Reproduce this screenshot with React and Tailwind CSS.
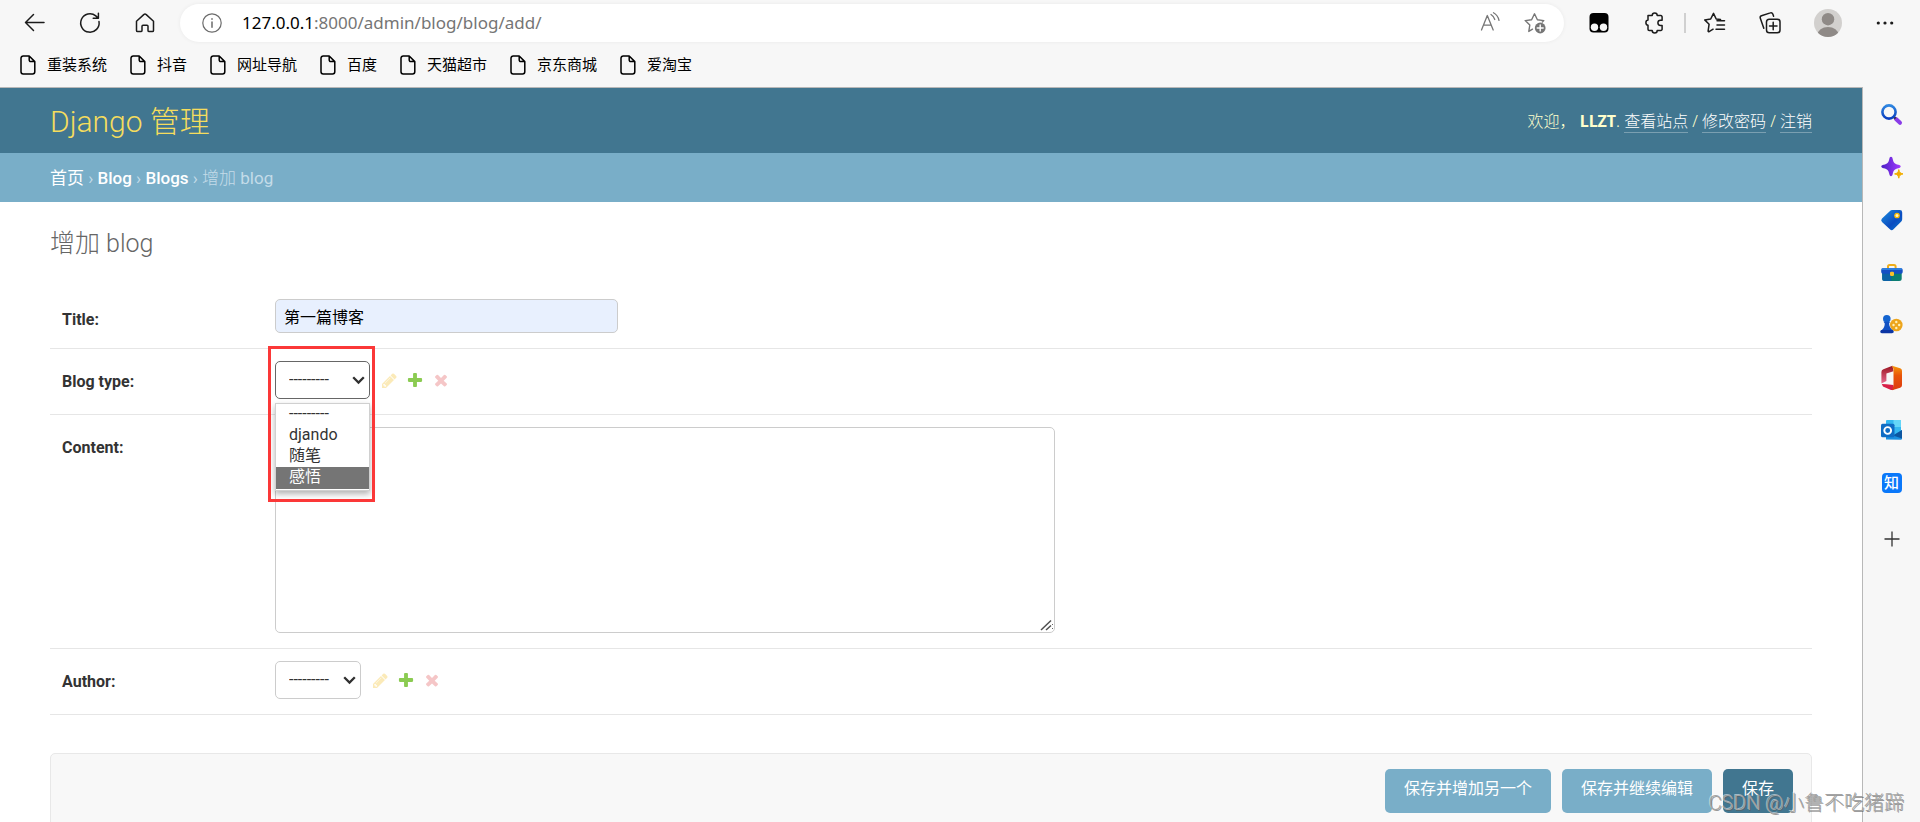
import React from "react";

const bookmarks = ["重装系统", "抖音", "网址导航", "百度", "天猫超市", "京东商城", "爱淘宝"];

const strokeProps = {
  fill: "none",
  stroke: "currentColor",
  strokeLinecap: "round",
  strokeLinejoin: "round",
};

function ToolButton({ label, children, className = "" }) {
  return (
    <button type="button" aria-label={label} className={`flex h-7 shrink-0 items-center justify-center ${className}`}>
      {children}
    </button>
  );
}

function Toolbar() {
  return (
    <div className="flex h-[46px] items-center pr-[23px] pl-[22px] text-[#1b1b1b]">
      <ToolButton label="返回" className="w-6">
        <svg width="24" height="24" viewBox="0 0 24 24" {...strokeProps} strokeWidth="1.5">
          <path d="M22 11.5H3.5M11.5 3.5l-8 8 8 8" />
        </svg>
      </ToolButton>
      <ToolButton label="刷新" className="ml-8 w-6">
        <svg width="24" height="24" viewBox="0 0 24 24" {...strokeProps} strokeWidth="1.5">
          <path d="M21 10.5a9.2 9.2 0 1 1-3.2-5.6l2.4 2.3M20.4 2.2v5.1h-5.2" />
        </svg>
      </ToolButton>
      <ToolButton label="主页" className="ml-[31px] w-6">
        <svg width="24" height="24" viewBox="0 0 24 24" {...strokeProps} strokeWidth="1.5">
          <path d="M3.5 10.2 11 3.4a1.4 1.4 0 0 1 2 0l7.500 6.800v9.200a1.200 1.200 0 0 1-1.200 1.200h-3.100a1.200 1.200 0 0 1-1.200-1.200v-4.200a1 1 0 0 0-1-1h-4a1 1 0 0 0-1 1v4.200a1.200 1.200 0 0 1-1.200 1.200H4.700a1.200 1.200 0 0 1-1.200-1.200z" />
        </svg>
      </ToolButton>

      <div className="ml-[23px] flex h-[38px] min-w-0 flex-1 items-center rounded-full bg-white pr-[17px] pl-[22px] shadow-[0_0_4px_rgba(0,0,0,0.06)]">
        <svg width="20" height="20" viewBox="0 0 20 20" {...strokeProps} strokeWidth="1.2" className="shrink-0 text-[#6b6b6b]">
          <circle cx="10" cy="10" r="9.200" />
          <path d="M10 9v5.200M10 5.800v.4" strokeWidth="1.500" />
        </svg>
        <a href="#address" className="ml-5 flex-1 truncate font-['Noto_Sans',sans-serif] text-[17px] leading-6 text-[#757575]">
          <span className="text-black">127.0.0.1</span>:8000/admin/blog/blog/add/
        </a>
        <ToolButton label="朗读" className="w-6 text-[#767676]">
          <svg width="24" height="24" viewBox="0 0 24 24" {...strokeProps} strokeWidth="1.300">
            <path d="M3.500 19 9.300 4.500 15.200 19M5.600 14.200h7.500M13 3.500c2 1.200 3.200 3 3.800 5M15.500 1.800c3 1.600 4.700 4.200 5.500 7.500" />
          </svg>
        </ToolButton>
        <ToolButton label="收藏此页" className="ml-[21px] w-6 text-[#767676]">
          <svg width="24" height="24" viewBox="0 0 24 24" {...strokeProps} strokeWidth="1.400">
            <path d="M9.500 18.200 5.800 20.400 6.800 14.100 2.200 9.600l6.400-.9L11.500 2.800l2.900 5.900 6.400.9-1.500 1.500" />
            <circle cx="17.200" cy="17" r="5.400" fill="currentColor" stroke="none" />
            <path d="M17.200 14v6M14.200 17h6" stroke="#fff" />
          </svg>
        </ToolButton>
      </div>

      <ToolButton label="Tampermonkey" className="ml-[23px] w-6">
        <svg width="24" height="24" viewBox="0 0 24 24">
          <rect x="2.500" y="2" width="19" height="19.500" rx="4" fill="#000" />
          <circle cx="7.500" cy="16.300" r="3.700" fill="#f7f7f7" />
          <circle cx="16.500" cy="16.300" r="3.700" fill="#f7f7f7" />
        </svg>
      </ToolButton>
      <ToolButton label="扩展" className="ml-[31px] w-6">
        <svg width="24" height="24" viewBox="0 0 24 24" {...strokeProps} strokeWidth="1.500">
          <path d="M6 4.600h4.200a2.500 2.500 0 0 1 5 0h3.700a1.200 1.200 0 0 1 1.200 1.200v3.400h-1.600a2.600 2.600 0 0 0 0 5.200h1.600v3.800a1.200 1.200 0 0 1-1.200 1.200h-3.700a2.500 2.500 0 0 1-5 0H7.200A1.200 1.200 0 0 1 6 18.200v-4a2.600 2.600 0 0 1 0-5.100z" />
        </svg>
      </ToolButton>
      <div className="ml-[18px] h-5 w-0.5 bg-[#d0d0d0]" />
      <ToolButton label="收藏夹" className="ml-[17px] w-6">
        <svg width="24" height="24" viewBox="0 0 24 24" {...strokeProps} strokeWidth="1.500">
          <path d="M17.500 8.600l-4.300-.6-2.700-5.600L7.700 8l-6 .9 4.400 4.300-1 6.900a.6.600 0 0 0 1 .5l4-2.400M14 9.800h7.500M14 14h7.500M13 18.200h8.500" />
        </svg>
      </ToolButton>
      <ToolButton label="集锦" className="ml-[31px] w-6">
        <svg width="24" height="24" viewBox="0 0 24 24" {...strokeProps} strokeWidth="1.500">
          <rect x="8.500" y="8.200" width="13.500" height="13.500" rx="2.800" />
          <path d="M15.200 11.200v7.500M11.500 15h7.500M5.800 17.200 2.300 7.200a2 2 0 0 1 1.200-2.500l8.800-2.800A2 2 0 0 1 14.800 3l.8 2.300" />
        </svg>
      </ToolButton>
      <ToolButton label="个人资料" className="ml-8 w-7">
        <svg width="28" height="28" viewBox="0 0 28 28">
          <defs>
            <clipPath id="avatar">
              <circle cx="14" cy="14" r="14" />
            </clipPath>
          </defs>
          <g clipPath="url(#avatar)">
            <rect width="28" height="28" fill="#d2d0ce" />
            <circle cx="14" cy="10.200" r="6.200" fill="#8f8a87" />
            <ellipse cx="14" cy="26" rx="10.500" ry="8" fill="#8f8a87" />
          </g>
        </svg>
      </ToolButton>
      <ToolButton label="设置及其他" className="ml-[31px] w-6">
        <svg width="24" height="24" viewBox="0 0 24 24" fill="#1b1b1b">
          <circle cx="5.300" cy="12" r="1.600" />
          <circle cx="12" cy="12" r="1.600" />
          <circle cx="18.700" cy="12" r="1.600" />
        </svg>
      </ToolButton>
    </div>
  );
}

function Bookmarks() {
  return (
    <nav aria-label="书签" className="flex h-[41px] items-center gap-[23px] px-5 pb-1 text-[15px] leading-5 text-black">
      {bookmarks.map((name) => (
        <a key={name} href="#bookmark" className="flex items-center gap-[11px] whitespace-nowrap">
          <svg width="16" height="20" viewBox="0 0 16 20" {...strokeProps} strokeWidth="1.500">
            <path d="M3.200 1h6l5.600 5.600v10.200a2.200 2.200 0 0 1-2.200 2.200H3.200A2.200 2.200 0 0 1 1 16.800V3.200A2.200 2.200 0 0 1 3.200 1zM9.200 1v4.100a1.500 1.500 0 0 0 1.500 1.500h4.100" />
          </svg>
          {name}
        </a>
      ))}
    </nav>
  );
}

function SearchIcon() {
  return (
    <svg width="24" height="24" viewBox="0 0 24 24" fill="none">
      <defs>
        <linearGradient id="lens" x1="0" y1="0" x2="0" y2="1">
          <stop offset="0" stopColor="#2f86e0" />
          <stop offset="1" stopColor="#0a3fc0" />
        </linearGradient>
      </defs>
      <path d="M16 16 20 19.800" stroke="#8a3ce8" strokeWidth="4" strokeLinecap="round" />
      <path d="M13.800 13.800 15.600 15.600" stroke="#3b3350" strokeWidth="2.600" />
      <circle cx="9" cy="9" r="6.600" stroke="url(#lens)" strokeWidth="2.600" />
    </svg>
  );
}

function SparkleIcon() {
  return (
    <svg width="24" height="24" viewBox="0 0 24 24">
      <defs>
        <linearGradient id="spark" x1="0" y1="0.500" x2="1" y2="0.500">
          <stop offset="0" stopColor="#4a1fc4" />
          <stop offset="1" stopColor="#a43cff" />
        </linearGradient>
      </defs>
      <path d="M11 .8c1 0 1.400.8 1.700 2.200.9 4 1.800 4.900 5.700 5.800 1.400.3 2.300.800 2.300 1.700s-.9 1.400-2.300 1.700c-3.900.9-4.800 1.800-5.700 5.800-.3 1.400-.7 2.200-1.700 2.200s-1.400-.8-1.700-2.200c-.9-4-1.800-4.900-5.700-5.800C2.200 11.900 1.300 11.400 1.300 10.500s.9-1.400 2.300-1.700c3.900-.9 4.800-1.800 5.700-5.800C9.600 1.600 10 .8 11 .8z" fill="url(#spark)" />
      <path d="M18.800 13.600c.6 2.900 1.300 3.600 4.200 4.300-2.900.7-3.600 1.400-4.200 4.300-.6-2.900-1.300-3.600-4.200-4.300 2.900-.7 3.600-1.400 4.200-4.300z" fill="#f2ae00" stroke="#f2ae00" strokeLinejoin="round" />
    </svg>
  );
}

function TagIcon() {
  return (
    <svg width="24" height="24" viewBox="0 0 24 24">
      <defs>
        <linearGradient id="tag" x1="0" y1="0" x2="1" y2="1">
          <stop offset="0" stopColor="#1c8fe0" />
          <stop offset="0.600" stopColor="#0b4cc0" />
          <stop offset="1" stopColor="#0a7ad0" />
        </linearGradient>
      </defs>
      <path d="M12.200 2h7.600a2.400 2.400 0 0 1 2.400 2.400v6.900a3 3 0 0 1-.9 2.100l-7.800 7.800a2.500 2.500 0 0 1-3.600 0L2 14a2.500 2.500 0 0 1 0-3.500l8-7.600A3.200 3.200 0 0 1 12.200 2z" fill="url(#tag)" />
      <circle cx="17" cy="7.500" r="2.200" fill="#fff3c4" stroke="#f5b800" strokeWidth="1.300" />
    </svg>
  );
}

function ToolboxIcon() {
  return (
    <svg width="24" height="24" viewBox="0 0 24 24">
      <path d="M8 8V5.600a1.600 1.600 0 0 1 1.600-1.600h4.400a1.600 1.600 0 0 1 1.600 1.600V8" fill="none" stroke="#f0ae1a" strokeWidth="2" />
      <path d="M2.200 11h19.500v6.500a2.500 2.500 0 0 1-2.500 2.500H4.700a2.500 2.500 0 0 1-2.500-2.500z" fill="#0b7d72" />
      <path d="M2.200 11h9v9h-6.500a2.500 2.500 0 0 1-2.500-2.500z" fill="#0d62a6" />
      <rect x="1.200" y="7.300" width="21.500" height="5.500" rx="1.700" fill="#154fc4" />
      <rect x="1.600" y="7.300" width="20.500" height="1.600" rx=".8" fill="#2a7fe0" />
      <rect x="10" y="10.800" width="4" height="4.200" rx="1.200" fill="#f8c02a" />
    </svg>
  );
}

function GamesIcon() {
  return (
    <svg width="24" height="24" viewBox="0 0 24 24">
      <circle cx="16.300" cy="12" r="6.300" fill="#eda51c" />
      <g fill="#fff0b8">
        <circle cx="16.300" cy="9" r="1.200" />
        <circle cx="13.500" cy="12" r="1.200" />
        <circle cx="19.200" cy="12" r="1.200" />
        <circle cx="16.300" cy="15" r="1.200" />
      </g>
      <circle cx="6.800" cy="5.800" r="3.800" fill="#1464d0" />
      <path d="M3.500 8.800h6.600l-1 1.800c.2 3 1.200 5 3.600 6.700.8.600 1 1.300 1 2.200H.6c0-1 .2-1.700 1-2.300 2.300-1.700 3-3.700 3.200-6.600z" fill="#1252c4" />
      <rect x=".4" y="17" width="13" height="3.200" rx="1.400" fill="#0c35a4" />
    </svg>
  );
}

function OfficeIcon() {
  return (
    <svg width="24" height="26" viewBox="0 0 24 26">
      <defs>
        <linearGradient id="office" x1="0" y1="0" x2="0" y2="1">
          <stop offset="0" stopColor="#f79a0a" />
          <stop offset="0.400" stopColor="#e8540a" />
          <stop offset="1" stopColor="#dd3a10" />
        </linearGradient>
        <linearGradient id="officeLeft" x1="0" y1="0" x2="0" y2="1">
          <stop offset="0" stopColor="#9a1420" />
          <stop offset="1" stopColor="#e86a90" />
        </linearGradient>
      </defs>
      <path d="M12.500.8 3.400 4.200A3 3 0 0 0 1.400 7v11.500l5-2.500V8.600l7.100-2.300z" fill="url(#officeLeft)" />
      <path d="M1.800 19 6.400 19.200 13.500 20v5L11 25 3 21.500z" fill="#d81e46" />
      <path d="M12 .8 20.200 3.300A2.600 2.600 0 0 1 22 5.800v14.400a2.600 2.600 0 0 1-1.800 2.500L12 25.200l1.500-4.600V4z" fill="url(#office)" />
    </svg>
  );
}

function OutlookIcon() {
  return (
    <svg width="24" height="24" viewBox="0 0 24 24">
      <rect x="6" y="2" width="15" height="15" rx="1" fill="#35b8f1" />
      <rect x="13.500" y="2" width="7.500" height="7" fill="#64d6f8" />
      <rect x="6" y="9" width="8" height="7" fill="#0a64b8" />
      <path d="M6 21.500V14l7 3.500 9-5.500v8.500a1.200 1.200 0 0 1-1.200 1.200z" fill="#1a8fe0" />
      <path d="M13 17.500 22 12v8.500z" fill="#0d56a0" />
      <rect x="1" y="5.800" width="13.500" height="13.500" rx="1.500" fill="#0f6cc4" />
      <circle cx="7.700" cy="12.500" r="3.400" fill="none" stroke="#fff" strokeWidth="1.900" />
    </svg>
  );
}

function Sidebar() {
  const items = [
    ["搜索", <SearchIcon />],
    ["发现", <SparkleIcon />],
    ["购物", <TagIcon />],
    ["工具", <ToolboxIcon />],
    ["游戏", <GamesIcon />],
    ["Office", <OfficeIcon />],
    ["Outlook", <OutlookIcon />],
    [
      "知乎",
      <span className="flex size-5 items-center justify-center rounded bg-[#0a78fa] text-[15px] leading-5 font-medium text-white">知</span>,
    ],
  ];
  return (
    <aside className="w-[57px] shrink-0 bg-[#f7f7f7] pt-0.5">
      <div className="grid h-[420px] grid-rows-8">
        {items.map(([label, icon]) => (
          <button key={label} type="button" aria-label={label} className="flex items-center justify-center">
            {icon}
          </button>
        ))}
      </div>
      <button type="button" aria-label="添加" className="mt-5 flex h-5 w-full items-center justify-center">
        <svg width="16" height="16" viewBox="0 0 16 16" stroke="#333" strokeWidth="1.300">
          <path d="M8 .5v15M.5 8h15" />
        </svg>
      </button>
    </aside>
  );
}

const PENCIL =
  "M491 1536l91-91-235-235-91 91v107h128v128h107zm523-928q0-22-22-22-10 0-17 7l-542 542q-7 7-7 17 0 22 22 22 10 0 17-7l542-542q7-7 7-17zm-54-192l416 416-832 832h-416v-416zm683 96q0 53-37 90l-166 166-416-416 166-165q36-38 90-38 53 0 91 38l235 234q37 39 37 91z";
const PLUS =
  "M1600 796v192q0 40-28 68t-68 28h-416v416q0 40-28 68t-68 28h-192q-40 0-68-28t-28-68v-416h-416q-40 0-68-28t-28-68v-192q0-40 28-68t68-28h416v-416q0-40 28-68t68-28h192q40 0 68 28t28 68v416h416q40 0 68 28t28 68z";
const CROSS =
  "M1490 1322q0 40-28 68l-136 136q-28 28-68 28t-68-28l-294-294-294 294q-28 28-68 28t-68-28l-136-136q-28-28-28-68t28-68l294-294-294-294q-28-28-28-68t28-68l136-136q28-28 68-28t68 28l294 294 294-294q28-28 68-28t68 28l136 136q28 28 28 68t-28 68l-294 294 294 294q28 28 28 68z";

function RelatedLinks() {
  return (
    <div className="ml-3 flex h-[38px] items-center gap-[10px]">
      <a href="#change" aria-label="修改" className="text-[#fbeab8]">
        <svg width="15" height="15" viewBox="128 100 1564 1564" fill="currentColor">
          <path d={PENCIL} />
        </svg>
      </a>
      <a href="#add" aria-label="增加" className="text-[#8bcb52]">
        <svg width="16" height="16" viewBox="100 100 1592 1592" fill="currentColor">
          <path d={PLUS} />
        </svg>
      </a>
      <a href="#delete" aria-label="删除" className="text-[#f5c6c7]">
        <svg width="16" height="16" viewBox="100 100 1592 1592" fill="currentColor">
          <path d={CROSS} />
        </svg>
      </a>
    </div>
  );
}

function Picker({ id, className, options, children }) {
  return (
    <div className="relative">
      <select id={id} className={`block h-[38px] appearance-none rounded-[5px] border bg-white pl-[13px] text-base text-[#333] outline-none ${className}`}>
        {options.map((o, i) => (
          <option key={i}>{o}</option>
        ))}
      </select>
      <svg className="pointer-events-none absolute top-[15px] right-[5px]" width="13" height="9" viewBox="0 0 13 9" fill="none" stroke="#303030" strokeWidth="2.300">
        <path d="M1.200 1.200 6.500 6.500 11.800 1.200" />
      </svg>
      {children}
    </div>
  );
}

function FormRow({ id, label, children }) {
  return (
    <div className="flex items-start border-b border-[#e6e6e6] pt-3 pb-[15px] pl-3">
      <label htmlFor={id} className="w-[213px] shrink-0 pt-[11px] text-base leading-5 font-bold text-[#333]">
        {label}
      </label>
      {children}
    </div>
  );
}

const typeOptions = ["---------", "djando", "随笔", "感悟"];

function TypeMenu() {
  return (
    <>
      <ul role="listbox" aria-label="Blog type" className="absolute top-[42px] left-0 z-10 w-full border border-[#d0d0d0] bg-white pb-px text-base leading-5 text-[#333] shadow-[0_3px_6px_rgba(0,0,0,0.3)]">
        {typeOptions.map((o) => (
          <li key={o} role="option" aria-selected={o === "感悟"} className="h-[21px] pl-[13px] aria-selected:h-[22px] aria-selected:bg-[#757575] aria-selected:text-white">
            {o}
          </li>
        ))}
      </ul>
      <div className="pointer-events-none absolute -top-[15px] -right-[5px] -left-[7px] z-20 h-[156px] border-3 border-[#fb3838]" />
    </>
  );
}

function AdminPage() {
  return (
    <div className="min-w-0 flex-1 overflow-hidden border-t border-r border-[#b8b8b8] bg-white">
      <header className="flex h-[65px] items-center justify-between bg-[#417690] px-[50px]">
        <h1 className="pt-0.5 text-[30px] leading-9 font-light text-[#f5dd5d]">
          <a href="#home">Django 管理</a>
        </h1>
        <div className="font-['Noto_Sans','Noto_Sans_CJK_SC',sans-serif] text-base leading-5 font-light text-[#ffffcc]">
          欢迎， <strong className="font-bold">LLZT</strong>.{" "}
          <a href="#site" className="border-b border-white/30 text-white">查看站点</a> /{" "}
          <a href="#password" className="border-b border-white/30 text-white">修改密码</a> /{" "}
          <a href="#logout" className="border-b border-white/30 text-white">注销</a>
        </div>
      </header>
      <nav aria-label="面包屑" className="h-[49px] bg-[#79aec8] px-[50px] pt-px text-[17px] leading-[49px] text-[#c4dce8]">
        <a href="#home" className="text-white">首页</a> ›{" "}
        <a href="#app" className="font-medium text-white">Blog</a> ›{" "}
        <a href="#model" className="font-medium text-white">Blogs</a> › <span className="font-light">增加</span> blog
      </nav>
      <main className="px-[50px] pt-[27px]">
        <h2 className="mb-7 text-[25px] leading-[30px] font-light text-[#666]">增加 blog</h2>
        <form onSubmit={(e) => e.preventDefault()}>
          <FormRow id="title" label="Title:">
            <input id="title" type="text" defaultValue="第一篇博客" className="h-[34px] w-[343px] rounded-[5px] border border-[#ccc] bg-[#e8f0fe] px-2 text-base text-black outline-none" />
          </FormRow>
          <FormRow id="type" label="Blog type:">
            <Picker id="type" className="w-[95px] border-[#666]" options={typeOptions}>
              <TypeMenu />
            </Picker>
            <RelatedLinks />
          </FormRow>
          <FormRow id="content" label="Content:">
            <div className="relative">
              <textarea id="content" className="block h-[206px] w-[780px] rounded-[5px] border border-[#ccc] bg-white px-2 py-1 text-base outline-none" />
              <svg className="pointer-events-none absolute right-[3px] bottom-[2px] bg-white" width="12" height="12" viewBox="0 0 12 12" fill="none" stroke="#505050" strokeWidth="1.500">
                <path d="M1 11 11 1.500M6 11 11 6.500" />
              </svg>
            </div>
          </FormRow>
          <FormRow id="author" label="Author:">
            <Picker id="author" className="w-[86px] border-[#ccc]" options={["---------"]} />
            <RelatedLinks />
          </FormRow>
          <div className="mt-[38px] flex justify-end gap-[11px] rounded-[5px] border border-[#e8e8e8] bg-[#f8f8f8] px-[18px] py-[15px] text-base leading-5 text-white">
            <button type="submit" className="h-11 rounded-[5px] bg-[#79aec8] px-[19px] pb-1">保存并增加另一个</button>
            <button type="submit" className="h-11 rounded-[5px] bg-[#79aec8] px-[19px] pb-1">保存并继续编辑</button>
            <button type="submit" className="h-11 rounded-[5px] bg-[#417690] px-[19px] pb-1">保存</button>
          </div>
        </form>
      </main>
    </div>
  );
}

export default function App() {
  return (
    <div className="relative flex h-screen flex-col overflow-hidden bg-[#f7f7f7] font-[Roboto,'Noto_Sans_CJK_SC',sans-serif]">
      <Toolbar />
      <Bookmarks />
      <div className="flex min-h-0 flex-1">
        <AdminPage />
        <Sidebar />
      </div>
      <p className="pointer-events-none absolute right-4 bottom-1 z-30 text-xl leading-[30px] font-light text-[#a4a4a4] [text-shadow:1px_1px_0_rgba(90,90,90,0.6),-1px_-1px_0_rgba(255,255,255,0.5)]">
        CSDN @小鲁不吃猪蹄
      </p>
    </div>
  );
}
